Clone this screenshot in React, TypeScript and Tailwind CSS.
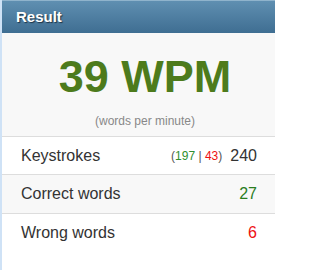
export default function App() {
  return (
    <div className="h-[270px] w-[275px] overflow-hidden border-l-2 border-[#cfe2f6] bg-white font-['Liberation_Sans',Arial,sans-serif]">
      <div className="flex h-[33px] items-center border-t border-[#8fb3cc] bg-gradient-to-b from-[#5f8fb1] to-[#3f6e92] pl-[14px]">
        <span className="text-[15px] font-bold text-white [text-shadow:1px_1px_1px_#1d3447]">
          Result
        </span>
      </div>
      <div className="flex h-[104px] flex-col items-center border-b border-[#dddddd] bg-[#f8f8f8] pl-[13px]">
        <div className="mt-[20px] text-[45px] font-bold leading-[48px] text-[#4d7b1c]">
          39 WPM
        </div>
        <div className="mt-[13px] text-[12px] leading-[14px] text-[#888888]">
          (words per minute)
        </div>
      </div>
      <div className="flex h-[38px] items-center justify-between border-b border-[#dddddd] bg-white pl-[19px] pr-[18px] text-[16px] text-[#333333]">
        <span>Keystrokes</span>
        <span className="flex items-center gap-[8px]">
          <span className="text-[12px] text-[#555555]">
            (<span className="text-[#2f8f2f]">197</span> |{" "}
            <span className="text-[#ee1111]">43</span>)
          </span>
          <span>240</span>
        </span>
      </div>
      <div className="flex h-[39px] items-center justify-between border-b border-[#dddddd] bg-[#f8f8f8] pl-[19px] pr-[18px] text-[16px] text-[#333333]">
        <span>Correct words</span>
        <span className="text-[#2a7d1e]">27</span>
      </div>
      <div className="flex h-[38px] items-center justify-between bg-white pl-[19px] pr-[18px] text-[16px] text-[#333333]">
        <span>Wrong words</span>
        <span className="text-[#ee1111]">6</span>
      </div>
    </div>
  );
}
